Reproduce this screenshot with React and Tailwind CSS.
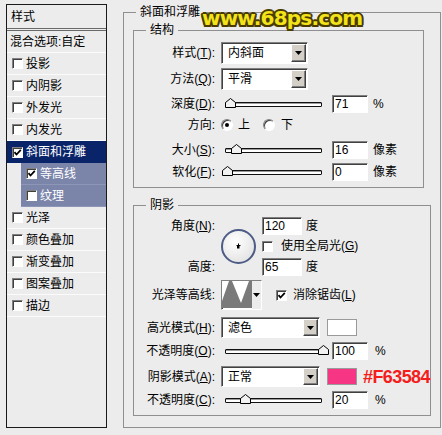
const sunken =
  "bg-white border border-t-[#808080] border-l-[#808080] border-r-white border-b-white shadow-[inset_1px_1px_0_#404040]";
const raised =
  "bg-[#d4d0c8] border border-t-white border-l-white border-r-[#404040] border-b-[#404040] shadow-[inset_-1px_-1px_0_#808080]";

function Key({ children }) {
  return <span className="underline">{children}</span>;
}

function Check({ checked }) {
  return (
    <div className={`w-[11px] h-[11px] shrink-0 flex items-center justify-center ${sunken}`}>
      {checked && (
        <svg width="9" height="9" viewBox="0 0 9 9">
          <path d="M1.5 4.2 L3.5 6.5 L7.8 1.8" fill="none" stroke="#000" strokeWidth="1.8" />
        </svg>
      )}
    </div>
  );
}

function Radio({ checked }) {
  return (
    <div className="w-[12px] h-[12px] shrink-0 rounded-full bg-white border border-t-[#808080] border-l-[#808080] border-r-white border-b-white shadow-[inset_1px_1px_0_#404040] flex items-center justify-center">
      {checked && <div className="w-[4px] h-[4px] rounded-full bg-black" />}
    </div>
  );
}

function Arrow() {
  return (
    <svg width="7" height="4" viewBox="0 0 7 4">
      <path d="M0 0 H7 L3.5 4 Z" fill="#000" />
    </svg>
  );
}

function Dropdown({ value, width, height }) {
  return (
    <div className={`flex items-stretch p-[1px] ${sunken} ${width} ${height}`}>
      <div className="flex-1 pl-[5px] flex items-center">{value}</div>
      <div className={`w-[15px] flex items-center justify-center ${raised}`}>
        <Arrow />
      </div>
    </div>
  );
}

function Field({ value, width = "w-[36px]" }) {
  return (
    <div className={`h-[18px] pl-[2px] flex items-center ${sunken} ${width}`}>{value}</div>
  );
}

function Slider({ pos }) {
  return (
    <div className="relative ml-[10px] w-[97px] h-[10px] flex items-center">
      <div className="w-full h-[5px] border border-[#111] bg-white rounded-[1px] shadow-[inset_0_1px_0_#9a9a9a]" />
      <svg className="absolute top-[-1px]" style={{ left: pos }} width="11" height="10" viewBox="0 0 11 10">
        <path d="M0.5 9.5 V4.5 L5.5 0.5 L10.5 4.5 V9.5 Z" fill="#f2f2f2" stroke="#000" />
      </svg>
    </div>
  );
}

function Label({ children }) {
  return <div className="w-[81px] shrink-0 text-right">{children}</div>;
}

function Row({ className = "", children }) {
  return <div className={`flex items-center ${className}`}>{children}</div>;
}

function StyleRow({ label, checked, variant }) {
  if (variant === "selected") {
    return (
      <div className="h-[22px] bg-[#0a246a] text-white flex items-center gap-[3px] pl-[5px]">
        <Check checked={checked} />
        <span>{label}</span>
      </div>
    );
  }
  if (variant === "sub") {
    return (
      <div className="h-[22px] ml-[14px] bg-[#7b85aa] border-b border-[#8d96b7] text-white flex items-center gap-[3px] pl-[5px]">
        <Check checked={checked} />
        <span>{label}</span>
      </div>
    );
  }
  return (
    <div className="h-[22px] border-b border-[#fbfbfb] flex items-center gap-[3px] pl-[5px]">
      <Check checked={checked} />
      <span>{label}</span>
    </div>
  );
}

const styles = [
  { label: "投影" },
  { label: "内阴影" },
  { label: "外发光" },
  { label: "内发光" },
  { label: "斜面和浮雕", checked: true, variant: "selected" },
  { label: "等高线", checked: true, variant: "sub" },
  { label: "纹理", variant: "sub" },
  { label: "光泽" },
  { label: "颜色叠加" },
  { label: "渐变叠加" },
  { label: "图案叠加" },
  { label: "描边" },
];

function StyleList() {
  return (
    <div className="ml-[6px] mt-[4px] w-[101px] h-[424px] shrink-0 border border-[#1a1a1a] flex flex-col">
      <div className="h-[26px] pl-[4px] flex items-center border-b-[3px] border-double border-[#6a6a6a]">
        样式
      </div>
      <div className="h-[22px] pl-[3px] flex items-center border-b border-[#fbfbfb]">混合选项:自定</div>
      {styles.map((s) => (
        <StyleRow key={s.label} {...s} />
      ))}
    </div>
  );
}

function AngleDial() {
  return (
    <div className="w-[35px] h-[35px] rounded-full border-2 border-[#4d5c86] bg-[radial-gradient(circle_at_40%_35%,#ffffff,#dcdcdc)] flex items-center justify-center">
      <svg width="7" height="7" viewBox="0 0 7 7">
        <path d="M3.5 0.5 V5 M1.5 2.5 H5.5" stroke="#000" strokeWidth="1" />
        <rect x="2" y="3" width="2.5" height="2.5" fill="#000" />
      </svg>
    </div>
  );
}

function Contour() {
  return (
    <div className={`w-[41px] h-[30px] flex items-stretch ${sunken}`}>
      <svg width="30" height="27" viewBox="0 0 30 27" className="bg-white">
        <path d="M0 27 V20 L7 0 H10 L19 22 L27 0 H30 V27 Z" fill="#7a7a7a" />
      </svg>
      <div className="flex-1 bg-[#ececec] flex items-center justify-center">
        <Arrow />
      </div>
    </div>
  );
}

export default function App() {
  return (
    <div className="relative w-[442px] h-[435px] overflow-hidden bg-[#ececec] font-['Liberation_Sans','Noto_Sans_CJK_SC',sans-serif] text-[12px] leading-[14px] text-black flex items-start">
      <StyleList />

      <fieldset className="ml-[16px] mt-[4px] w-[311px] h-[424px] shrink-0 border border-[#8f8f8f] px-[9px]">
        <legend className="ml-[3px] px-[4px] leading-[16px]">斜面和浮雕</legend>

        <fieldset className="mt-[2px] w-[291px] border border-[#8f8f8f]">
          <legend className="ml-[12px] px-[4px] leading-[16px]">结构</legend>
          <div className="pt-[4px] pb-[6px]">
            <Row className="h-[22px]">
              <Label>
                样式(<Key>T</Key>):
              </Label>
              <div className="ml-[6px]">
                <Dropdown value="内斜面" width="w-[87px]" height="h-[22px]" />
              </div>
            </Row>
            <Row className="h-[22px] mt-[4px]">
              <Label>
                方法(<Key>Q</Key>):
              </Label>
              <div className="ml-[6px]">
                <Dropdown value="平滑" width="w-[87px]" height="h-[22px]" />
              </div>
            </Row>
            <Row className="h-[18px] mt-[5px]">
              <Label>
                深度(<Key>D</Key>):
              </Label>
              <Slider pos={0} />
              <div className="ml-[10px]">
                <Field value="71" />
              </div>
              <span className="ml-[5px]">%</span>
            </Row>
            <Row className="h-[18px] mt-[3px]">
              <Label>方向:</Label>
              <div className="ml-[6px]">
                <Radio checked />
              </div>
              <span className="ml-[5px]">上</span>
              <div className="ml-[13px]">
                <Radio />
              </div>
              <span className="ml-[6px]">下</span>
            </Row>
            <Row className="h-[18px] mt-[7px]">
              <Label>
                大小(<Key>S</Key>):
              </Label>
              <Slider pos={6} />
              <div className="ml-[10px]">
                <Field value="16" />
              </div>
              <span className="ml-[5px]">像素</span>
            </Row>
            <Row className="h-[18px] mt-[4px]">
              <Label>
                软化(<Key>F</Key>):
              </Label>
              <Slider pos={-3} />
              <div className="ml-[10px]">
                <Field value="0" />
              </div>
              <span className="ml-[5px]">像素</span>
            </Row>
          </div>
        </fieldset>

        <fieldset className="mt-[9px] w-[290px] border border-[#8f8f8f]">
          <legend className="ml-[12px] px-[4px] leading-[16px]">阴影</legend>
          <div className="pt-[4px] pb-[6px]">
            <div className="grid grid-cols-[81px_35px_1fr] grid-rows-[17px_18px_17px] gap-x-[6px] gap-y-[3px]">
              <div className="col-start-1 row-start-1 text-right self-center">
                角度(<Key>N</Key>):
              </div>
              <div className="col-start-2 row-start-1 row-span-3 self-center">
                <AngleDial />
              </div>
              <div className="col-start-3 row-start-1 flex items-center">
                <Field value="120" width="w-[40px]" />
                <span className="ml-[4px]">度</span>
              </div>
              <div className="col-start-3 row-start-2 flex items-center">
                <Check />
                <span className="ml-[8px]">
                  使用全局光(<Key>G</Key>)
                </span>
              </div>
              <div className="col-start-1 row-start-3 text-right self-center">高度:</div>
              <div className="col-start-3 row-start-3 flex items-center">
                <Field value="65" width="w-[40px]" />
                <span className="ml-[4px]">度</span>
              </div>
            </div>

            <Row className="h-[30px] mt-[5px]">
              <Label>光泽等高线:</Label>
              <div className="ml-[6px]">
                <Contour />
              </div>
              <div className="ml-[14px]">
                <Check checked />
              </div>
              <span className="ml-[6px]">
                消除锯齿(<Key>L</Key>)
              </span>
            </Row>

            <Row className="h-[21px] mt-[7px]">
              <Label>
                高光模式(<Key>H</Key>):
              </Label>
              <div className="ml-[6px]">
                <Dropdown value="滤色" width="w-[99px]" height="h-[21px]" />
              </div>
              <div className="ml-[7px] w-[30px] h-[17px] bg-white border border-[#9a9a9a]" />
            </Row>
            <Row className="h-[18px] mt-[4px]">
              <Label>
                不透明度(<Key>O</Key>):
              </Label>
              <Slider pos={93} />
              <div className="ml-[10px]">
                <Field value="100" />
              </div>
              <span className="ml-[7px]">%</span>
            </Row>
            <Row className="h-[21px] mt-[6px]">
              <Label>
                阴影模式(<Key>A</Key>):
              </Label>
              <div className="ml-[6px]">
                <Dropdown value="正常" width="w-[99px]" height="h-[21px]" />
              </div>
              <div className="ml-[7px] w-[30px] h-[17px] bg-[#f63584] border border-[#9a9a9a]" />
              <span className="ml-[6px] text-[18px] leading-none font-bold tracking-[-0.6px] text-[#f51c1c]">
                #F63584
              </span>
            </Row>
            <Row className="h-[18px] mt-[4px]">
              <Label>
                不透明度(<Key>C</Key>):
              </Label>
              <Slider pos={15} />
              <div className="ml-[10px]">
                <Field value="20" />
              </div>
              <span className="ml-[7px]">%</span>
            </Row>
          </div>
        </fieldset>
      </fieldset>

      <div className="absolute left-[202px] top-[8px] font-['DejaVu_Sans',sans-serif] font-bold text-[20px] leading-none tracking-[-0.8px] text-[#f2e31b] [text-shadow:2px_0_#4a3b00,-2px_0_#4a3b00,0_2px_#4a3b00,0_-2px_#4a3b00,1.5px_1.5px_#4a3b00,-1.5px_-1.5px_#4a3b00,1.5px_-1.5px_#4a3b00,-1.5px_1.5px_#4a3b00]">
        www.68ps.com
      </div>
    </div>
  );
}
